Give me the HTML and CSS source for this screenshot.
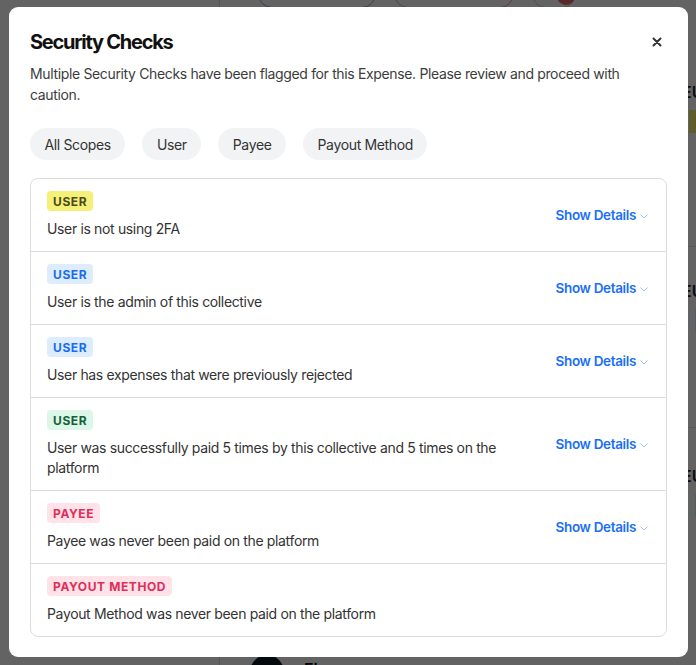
FILE: index.html
```html
<!DOCTYPE html>
<html lang="en">
<head>
<meta charset="utf-8">
<title>Security Checks</title>
<link rel="stylesheet" href="styles.css">
</head>
<body>
<div class="page">
  <aside class="sidebar"></aside>
  <main class="main">
    <div class="toolbar">
      <span class="tb-pill tb-blue"></span>
      <span class="tb-pill tb-red"></span>
      <span class="tb-pill tb-small"><span class="tb-dot"></span></span>
    </div>
    <div class="bg-row bg-row-1"><span class="bg-eu">EUR</span><span class="bg-tag bg-yellow">N</span></div>
    <div class="bg-row bg-row-2"><span class="bg-eu">EUR</span><span class="bg-tag bg-blue">·</span></div>
    <div class="bg-row bg-row-3"><span class="bg-eu">EUR</span><span class="bg-tag bg-green">·</span></div>
    <div class="bg-foot"><span class="bg-avatar"></span><span class="bg-fi">Fi</span></div>
  </main>
</div>
<div class="overlay"></div>

<div class="modal" role="dialog">
  <header class="modal-head">
    <h1 class="modal-title">Security Checks</h1>
    <button class="close" aria-label="Close">
      <svg width="10" height="10" viewBox="0 0 10 10"><path d="M1.5 1.5 L8.5 8.5 M8.5 1.5 L1.5 8.5" stroke="#333" stroke-width="2" stroke-linecap="round"/></svg>
    </button>
  </header>
  <p class="modal-desc">Multiple Security Checks have been flagged for this Expense. Please review and proceed with caution.</p>

  <div class="filters">
    <span class="filter">All Scopes</span>
    <span class="filter">User</span>
    <span class="filter">Payee</span>
    <span class="filter">Payout Method</span>
  </div>

  <ul class="checks">
    <li class="check">
      <div class="check-body">
        <span class="badge badge-yellow">User</span>
        <p class="check-text">User is not using 2FA</p>
      </div>
      <a class="details">Show Details<svg class="chev" width="8" height="5" viewBox="0 0 8 5"><path d="M0.5 0.5 L4 4 L7.5 0.5" fill="none" stroke="#9cc0f5" stroke-width="1"/></svg></a>
    </li>
    <li class="check">
      <div class="check-body">
        <span class="badge badge-blue">User</span>
        <p class="check-text">User is the admin of this collective</p>
      </div>
      <a class="details">Show Details<svg class="chev" width="8" height="5" viewBox="0 0 8 5"><path d="M0.5 0.5 L4 4 L7.5 0.5" fill="none" stroke="#9cc0f5" stroke-width="1"/></svg></a>
    </li>
    <li class="check">
      <div class="check-body">
        <span class="badge badge-blue">User</span>
        <p class="check-text">User has expenses that were previously rejected</p>
      </div>
      <a class="details">Show Details<svg class="chev" width="8" height="5" viewBox="0 0 8 5"><path d="M0.5 0.5 L4 4 L7.5 0.5" fill="none" stroke="#9cc0f5" stroke-width="1"/></svg></a>
    </li>
    <li class="check">
      <div class="check-body">
        <span class="badge badge-green">User</span>
        <p class="check-text">User was successfully paid 5 times by this collective and 5 times on the platform</p>
      </div>
      <a class="details">Show Details<svg class="chev" width="8" height="5" viewBox="0 0 8 5"><path d="M0.5 0.5 L4 4 L7.5 0.5" fill="none" stroke="#9cc0f5" stroke-width="1"/></svg></a>
    </li>
    <li class="check">
      <div class="check-body">
        <span class="badge badge-red">Payee</span>
        <p class="check-text">Payee was never been paid on the platform</p>
      </div>
      <a class="details">Show Details<svg class="chev" width="8" height="5" viewBox="0 0 8 5"><path d="M0.5 0.5 L4 4 L7.5 0.5" fill="none" stroke="#9cc0f5" stroke-width="1"/></svg></a>
    </li>
    <li class="check">
      <div class="check-body">
        <span class="badge badge-red">Payout Method</span>
        <p class="check-text">Payout Method was never been paid on the platform</p>
      </div>
    </li>
  </ul>
</div>
</body>
</html>
```

FILE: styles.css
```css
* { box-sizing: border-box; }
html, body { margin: 0; padding: 0; }
body {
  width: 696px;
  height: 665px;
  overflow: hidden;
  font-family: Inter, "Noto Sans", sans-serif;
  background: #fff;
  position: relative;
}

/* background page */
.page { display: flex; height: 665px; }
.sidebar { width: 220px; border-right: 1px solid #ddd; flex: none; }
.main { flex: 1; display: flex; flex-direction: column; }
.toolbar { display: flex; gap: 18px; padding: 0 0 0 38px; height: 10px; flex: none; }
.tb-pill { display: block; height: 28px; margin-top: -20px; border-radius: 14px; border: 1px solid #8ea6d6; width: 118px; }
.tb-red { border-color: #e8a0a8; width: 120px; }
.tb-small { width: 44px; border-color: #ccc; position: relative; }
.tb-dot { position: absolute; right: 0; top: 6px; width: 18px; height: 18px; border-radius: 50%; background: #e56b6b; }
.bg-row { border-bottom: 1px solid #e5e5e5; display: flex; flex-direction: column; align-items: flex-end; gap: 8px; flex: none; }
.bg-row-1 { height: 237px; padding-top: 72px; }
.bg-row-2 { height: 181px; padding-top: 34px; }
.bg-row-3 { height: 227px; padding-top: 38px; border-bottom: 0; }
.bg-eu { font-size: 16px; font-weight: 600; color: #222; margin-right: -18px; line-height: 20px; }
.bg-tag { font-size: 14px; font-weight: 700; padding: 3px 6px; margin-right: -16px; }
.bg-yellow { background: #f4ef6f; color: #333; }
.bg-blue { background: #dbe9fd; color: #333; }
.bg-green { background: #dcf5e5; color: #333; }
.bg-foot { display: flex; align-items: flex-start; gap: 20px; padding: 0 0 0 30px; flex: none; }
.bg-avatar { width: 34px; height: 34px; border-radius: 50%; background: #0b1a25; flex: none; }
.bg-fi { font-weight: 600; font-size: 16px; margin-top: 4px; }

.overlay { position: absolute; inset: 0; background: rgba(0, 0, 0, 0.61); }

/* modal */
.modal {
  position: absolute;
  left: 9px;
  top: 7px;
  width: 679px;
  height: 650px;
  background: #fff;
  border-radius: 9px;
  padding: 21px 21px 20px 21px;
  color: #333;
  letter-spacing: -0.35px;
}
.modal-head { display: flex; align-items: center; justify-content: space-between; }
.modal-title {
  margin: 0;
  font-size: 20px;
  font-weight: 700;
  letter-spacing: -1.25px;
  color: #111;
  line-height: 28px;
}
.close {
  border: 0;
  background: none;
  padding: 0;
  margin-right: 5px;
  width: 10px;
  height: 10px;
  display: flex;
  cursor: pointer;
}
.modal-desc {
  margin: 7px 0 0;
  font-size: 14px;
  line-height: 21px;
  color: #3c3c3c;
  padding-right: 30px;
}

.filters { display: flex; gap: 17px; margin-top: 23px; }
.filter {
  background: #f2f3f5;
  border-radius: 16px;
  height: 32px;
  padding: 0 14.5px;
  display: flex;
  align-items: center;
  font-size: 14px;
  color: #333;
}

.checks {
  list-style: none;
  margin: 18px 0 0;
  padding: 0;
  border: 1px solid #dcdcdc;
  border-radius: 8px;
}
.check {
  display: flex;
  align-items: center;
  justify-content: space-between;
  padding: 12px 18px 12px 16px;
  border-top: 1px solid #dcdcdc;
}
.check:first-child { border-top: 0; }
.check-body { display: flex; flex-direction: column; align-items: flex-start; gap: 8px; max-width: 470px; }
.badge {
  display: inline-flex;
  align-items: center;
  height: 20px;
  padding: 0 6px;
  border-radius: 4px;
  font-size: 12px;
  font-weight: 700;
  letter-spacing: 0.6px;
  text-transform: uppercase;
}
.badge-yellow { background: #f4f078; color: #4c4a1c; }
.badge-blue { background: #ddedfe; color: #1a6cf2; }
.badge-green { background: #dcf7e8; color: #15603a; }
.badge-red { background: #ffe3e8; color: #e02e5a; }
.check-text { margin: 0; font-size: 14px; line-height: 20px; color: #333; }

.details {
  display: flex;
  align-items: center;
  gap: 4px;
  font-size: 13.5px;
  font-weight: 600;
  letter-spacing: -0.35px;
  color: #1a6ff5;
  cursor: pointer;
}
.chev { margin-top: 2px; }
```
